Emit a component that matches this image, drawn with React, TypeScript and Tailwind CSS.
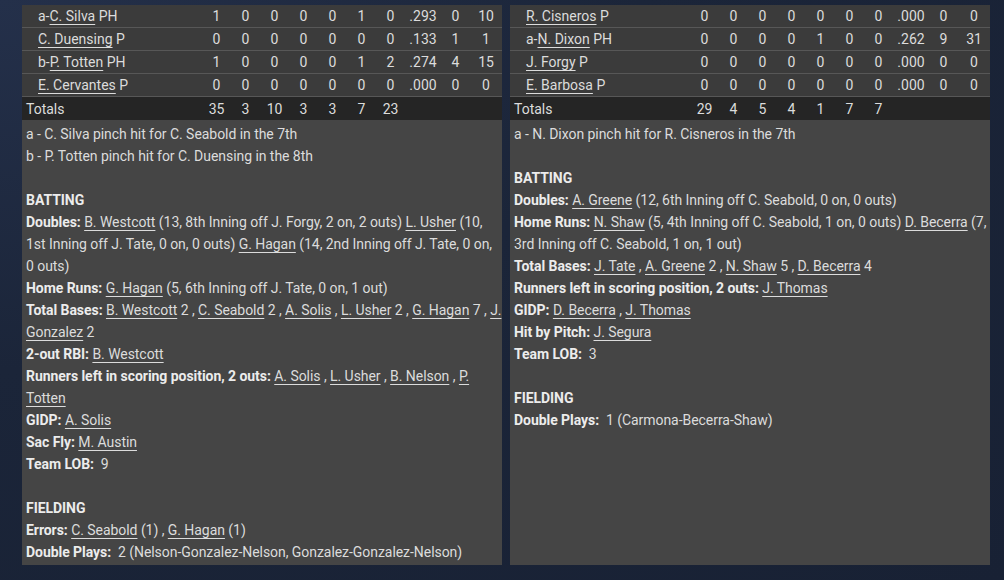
import React from "react";

type Row = { pre?: string; name: string; pos: string; stats: string[] };

const awayRows: Row[] = [
  { pre: "a-", name: "C. Silva", pos: "PH", stats: ["1", "0", "0", "0", "0", "1", "0", ".293", "0", "10"] },
  { name: "C. Duensing", pos: "P", stats: ["0", "0", "0", "0", "0", "0", "0", ".133", "1", "1"] },
  { pre: "b-", name: "P. Totten", pos: "PH", stats: ["1", "0", "0", "0", "0", "1", "2", ".274", "4", "15"] },
  { name: "E. Cervantes", pos: "P", stats: ["0", "0", "0", "0", "0", "0", "0", ".000", "0", "0"] },
];

const homeRows: Row[] = [
  { name: "R. Cisneros", pos: "P", stats: ["0", "0", "0", "0", "0", "0", "0", ".000", "0", "0"] },
  { pre: "a-", name: "N. Dixon", pos: "PH", stats: ["0", "0", "0", "0", "1", "0", "0", ".262", "9", "31"] },
  { name: "J. Forgy", pos: "P", stats: ["0", "0", "0", "0", "0", "0", "0", ".000", "0", "0"] },
  { name: "E. Barbosa", pos: "P", stats: ["0", "0", "0", "0", "0", "0", "0", ".000", "0", "0"] },
];

const gridCols = "grid grid-cols-[180px_repeat(7,29px)_36px_29px_1fr] items-center";

const L = ({ children }: { children: React.ReactNode }) => (
  <span className="underline underline-offset-[3px] decoration-1">{children}</span>
);

const B = ({ children }: { children: React.ReactNode }) => (
  <span className="font-bold text-[#ececec]">{children}</span>
);

const BoxTable = ({ rows, totals }: { rows: Row[]; totals: string[] }) => (
  <div>
    {rows.map((r, i) => (
      <div key={i} className={`${gridCols} h-[23px] bg-[#3b3b3b] border-b border-[#575757]`}>
        <div className="pl-4 whitespace-nowrap">
          {r.pre}
          <L>{r.name}</L> {r.pos}
        </div>
        {r.stats.map((s, j) => (
          <div key={j} className="text-center">
            {s}
          </div>
        ))}
      </div>
    ))}
    <div className={`${gridCols} h-[23px] bg-[#252525]`}>
      <div className="pl-1">Totals</div>
      {totals.map((s, j) => (
        <div key={j} className="text-center">
          {s}
        </div>
      ))}
    </div>
  </div>
);

const Panel = ({ children }: { children: React.ReactNode }) => (
  <div className="w-[480px] flex flex-col bg-[#454545]">{children}</div>
);

// notes block under the box score
const Notes = ({ children }: { children: React.ReactNode }) => (
  <div className="flex-1 pl-1 pr-0 pt-[3px] tracking-[-0.05px]">{children}</div>
);

export default function App() {
  return (
    <div
      className="w-[1004px] h-[580px] overflow-hidden bg-[#1b2539] bg-[radial-gradient(ellipse_at_top_left,#24304a_0%,#1b2539_45%,#182134_100%)] flex gap-[8px] pl-[22px] pt-[5px] pb-[15px] text-[14px] leading-[22px] text-[#dcdcdc]"
      style={{ fontFamily: "Roboto, 'Noto Sans', sans-serif" }}
    >
      <Panel>
        <BoxTable rows={awayRows} totals={["35", "3", "10", "3", "3", "7", "23"]} />
        <Notes>
          <p>a - C. Silva pinch hit for C. Seabold in the 7th</p>
          <p>b - P. Totten pinch hit for C. Duensing in the 8th</p>
          <p>&nbsp;</p>
          <p>
            <B>BATTING</B>
          </p>
          <p>
            <B>Doubles:</B> <L>B. Westcott</L> (13, 8th Inning off J. Forgy, 2 on, 2 outs) <L>L. Usher</L> (10, 1st
            Inning off J. Tate, 0 on, 0 outs) <L>G. Hagan</L> (14, 2nd Inning off J. Tate, 0 on, 0 outs)
          </p>
          <p>
            <B>Home Runs:</B> <L>G. Hagan</L> (5, 6th Inning off J. Tate, 0 on, 1 out)
          </p>
          <p>
            <B>Total Bases:</B> <L>B. Westcott</L> 2 , <L>C. Seabold</L> 2 , <L>A. Solis</L> , <L>L. Usher</L> 2 ,{" "}
            <L>G. Hagan</L> 7 , <L>J. Gonzalez</L> 2
          </p>
          <p>
            <B>2-out RBI:</B> <L>B. Westcott</L>
          </p>
          <p>
            <B>Runners left in scoring position, 2 outs:</B> <L>A. Solis</L> , <L>L. Usher</L> , <L>B. Nelson</L> ,{" "}
            <L>P. Totten</L>
          </p>
          <p>
            <B>GIDP:</B> <L>A. Solis</L>
          </p>
          <p>
            <B>Sac Fly:</B> <L>M. Austin</L>
          </p>
          <p>
            <B>Team LOB:</B>&nbsp; 9
          </p>
          <p>&nbsp;</p>
          <p>
            <B>FIELDING</B>
          </p>
          <p>
            <B>Errors:</B> <L>C. Seabold</L> (1) , <L>G. Hagan</L> (1)
          </p>
          <p>
            <B>Double Plays:</B>&nbsp; 2 (Nelson-Gonzalez-Nelson, Gonzalez-Gonzalez-Nelson)
          </p>
        </Notes>
      </Panel>
      <Panel>
        <BoxTable rows={homeRows} totals={["29", "4", "5", "4", "1", "7", "7"]} />
        <Notes>
          <p>a - N. Dixon pinch hit for R. Cisneros in the 7th</p>
          <p>&nbsp;</p>
          <p>
            <B>BATTING</B>
          </p>
          <p>
            <B>Doubles:</B> <L>A. Greene</L> (12, 6th Inning off C. Seabold, 0 on, 0 outs)
          </p>
          <p>
            <B>Home Runs:</B> <L>N. Shaw</L> (5, 4th Inning off C. Seabold, 1 on, 0 outs) <L>D. Becerra</L> (7, 3rd
            Inning off C. Seabold, 1 on, 1 out)
          </p>
          <p>
            <B>Total Bases:</B> <L>J. Tate</L> , <L>A. Greene</L> 2 , <L>N. Shaw</L> 5 , <L>D. Becerra</L> 4
          </p>
          <p>
            <B>Runners left in scoring position, 2 outs:</B> <L>J. Thomas</L>
          </p>
          <p>
            <B>GIDP:</B> <L>D. Becerra</L> , <L>J. Thomas</L>
          </p>
          <p>
            <B>Hit by Pitch:</B> <L>J. Segura</L>
          </p>
          <p>
            <B>Team LOB:</B>&nbsp; 3
          </p>
          <p>&nbsp;</p>
          <p>
            <B>FIELDING</B>
          </p>
          <p>
            <B>Double Plays:</B>&nbsp; 1 (Carmona-Becerra-Shaw)
          </p>
        </Notes>
      </Panel>
    </div>
  );
}
